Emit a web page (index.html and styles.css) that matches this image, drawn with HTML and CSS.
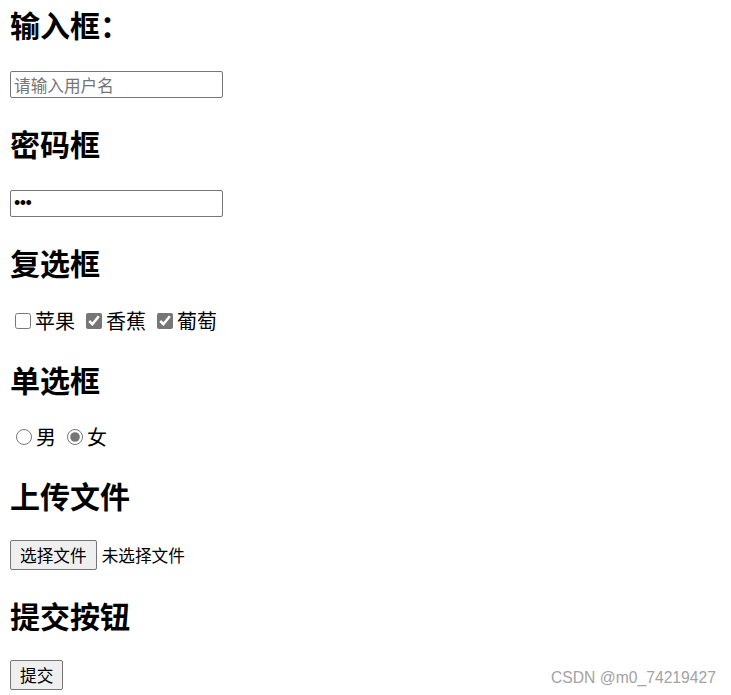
FILE: index.html
```html
<!DOCTYPE html>
<html lang="zh-CN">
<head>
    <meta charset="UTF-8">
    <meta name="viewport" content="width=device-width, initial-scale=1.0">
    <title>表单元素</title>

    <!--CSS Styling-->
    <link rel="stylesheet" href="styles.css">
</head>
<body>
    <form class="demo-form">
        <!--Text Input-->
        <h2>输入框：</h2>
        <div class="row row-text">
            <input type="text" class="text-box" placeholder="请输入用户名">
        </div>

        <!--Password-->
        <h2>密码框</h2>
        <div class="row row-text">
            <input type="password" class="text-box pass-box" value="123">
        </div>

        <!--Checkbox-->
        <h2>复选框</h2>
        <div class="row row-check">
            <label class="option"><input type="checkbox" class="check">苹果</label>
            <label class="option"><input type="checkbox" class="check" checked>香蕉</label>
            <label class="option"><input type="checkbox" class="check" checked>葡萄</label>
        </div>

        <!--Radio-->
        <h2>单选框</h2>
        <div class="row row-radio">
            <label class="option"><input type="radio" name="sex" class="radio">男</label>
            <label class="option"><input type="radio" name="sex" class="radio" checked>女</label>
        </div>

        <!--File Upload-->
        <h2>上传文件</h2>
        <div class="row row-file">
            <button type="button" class="btn">选择文件</button>
            <span class="file-name">未选择文件</span>
        </div>

        <!--Submit-->
        <h2>提交按钮</h2>
        <div class="row row-file">
            <button type="submit" class="btn">提交</button>
        </div>
    </form>

    <div class="watermark">CSDN @m0_74219427</div>
</body>
</html>
```

FILE: styles.css
```css
/* Global Styles */
body, html {
    margin: 0;
    padding: 0;
}

body {
    padding: 4px 10px 0;
    font-family: "Noto Sans CJK SC", sans-serif;
    font-size: 20px;
    color: #000;
    background: #fff;
}

/* Headings */
h2 {
    font-size: 30px;
    font-weight: bold;
    line-height: 40px;
    margin: 25px 0;
}

h2:first-child {
    margin-top: 0;
}

/* Rows */
.row {
    display: flex;
    align-items: center;
    height: 29px;
}

.row-text {
    align-items: flex-end;
}

.row-check {
    height: 27px;
    gap: 6px;
}

.row-radio {
    height: 26px;
    gap: 5px;
}

.row-file {
    height: 30px;
}

/* Text Inputs */
.text-box {
    box-sizing: border-box;
    width: 213px;
    height: 27px;
    margin: 0;
    padding: 1px 3px;
    border: 1px solid #767676;
    border-radius: 2px;
    font-family: "Noto Sans CJK SC", sans-serif;
    font-size: 16.67px;
}

.text-box::placeholder {
    color: #757575;
}

.pass-box {
    font-family: "Liberation Sans", Arial, sans-serif;
    font-size: 18px;
    letter-spacing: -0.5px;
}

/* Checkbox / Radio */
.option {
    display: inline-flex;
    align-items: center;
    line-height: 24px;
}

.check {
    width: 16px;
    height: 16px;
    margin: 0 4px 0 5px;
    accent-color: #767676;
}

.radio {
    width: 16px;
    height: 16px;
    margin: 0 4px 0 6px;
    accent-color: #767676;
}

/* Buttons */
.btn {
    box-sizing: border-box;
    height: 28px;
    margin: 0;
    padding: 0 9px;
    border: 1px solid #767676;
    border-radius: 2px;
    background: #efefef;
    font-family: "Noto Sans CJK SC", sans-serif;
    font-size: 16.67px;
    color: #000;
}

.row-file .btn {
    height: 30px;
}

.file-name {
    margin-left: 5px;
    font-size: 16.67px;
}

/* Watermark */
.watermark {
    position: absolute;
    right: 15px;
    bottom: 8px;
    font-family: "Liberation Sans", Arial, sans-serif;
    font-size: 15.7px;
    color: #a3a3a3;
}
```
